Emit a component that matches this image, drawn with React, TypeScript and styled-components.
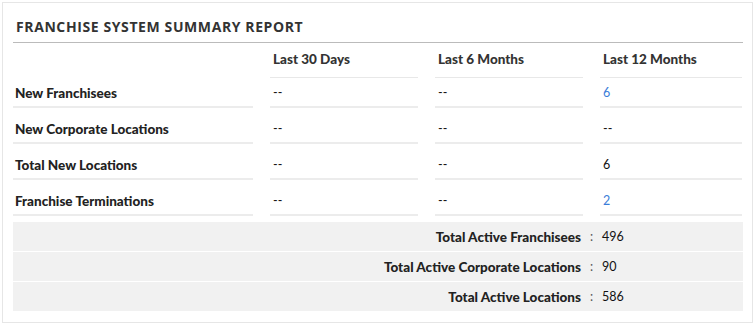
import React from 'react';
import styled, { createGlobalStyle } from 'styled-components';

const GlobalStyle = createGlobalStyle`
  html, body {
    margin: 0;
    padding: 0;
    background: #ffffff;
  }
  body {
    font-family: Lato, "Liberation Sans", sans-serif;
    color: #222;
  }
`;

type Cell = { value: string; link?: boolean };

interface Row {
  label: string;
  cells: Cell[];
}

const rows: Row[] = [
  { label: 'New Franchisees', cells: [{ value: '--' }, { value: '--' }, { value: '6', link: true }] },
  { label: 'New Corporate Locations', cells: [{ value: '--' }, { value: '--' }, { value: '--' }] },
  { label: 'Total New Locations', cells: [{ value: '--' }, { value: '--' }, { value: '6' }] },
  { label: 'Franchise Terminations', cells: [{ value: '--' }, { value: '--' }, { value: '2', link: true }] },
];

const totals = [
  { label: 'Total Active Franchisees', value: '496' },
  { label: 'Total Active Corporate Locations', value: '90' },
  { label: 'Total Active Locations', value: '586' },
];

const periods = ['Last 30 Days', 'Last 6 Months', 'Last 12 Months'];

const App = () => {
  return (
    <>
      <GlobalStyle />
      <Page>
        <Panel>
          <Title>Franchise System Summary Report</Title>
          <SummaryGrid>
            <HeadCell $blank />
            {periods.map((p) => (
              <HeadCell key={p}>{p}</HeadCell>
            ))}
            {rows.map((row, r) => (
              <React.Fragment key={row.label}>
                <LabelCell $first={r === 0}>{row.label}</LabelCell>
                {row.cells.map((c, i) => (
                  <ValueCell key={i} $first={r === 0} $link={c.link}>
                    {c.value}
                  </ValueCell>
                ))}
              </React.Fragment>
            ))}
          </SummaryGrid>
          <Totals>
            {totals.map((t) => (
              <TotalRow key={t.label}>
                <TotalLabel>{t.label}</TotalLabel>
                <Colon>:</Colon>
                <TotalValue>{t.value}</TotalValue>
              </TotalRow>
            ))}
          </Totals>
        </Panel>
      </Page>
    </>
  );
};

export default App;

const Page = styled.div`
  width: 755px;
  height: 326px;
  padding: 2px 0 0 2px;
  box-sizing: border-box;
`;

const Panel = styled.div`
  width: 751px;
  height: 321px;
  box-sizing: border-box;
  border: 1px solid #e6e6e6;
  padding: 0 9px 0 10px;
`;

const Title = styled.h3`
  margin: 0;
  height: 40px;
  box-sizing: border-box;
  padding: 15px 0 0 3px;
  border-bottom: 1px solid #bbbbbb;
  font-family: "Open Sans", "Liberation Sans", sans-serif;
  font-size: 14px;
  font-weight: 700;
  line-height: 18px;
  text-transform: uppercase;
  letter-spacing: 0.6px;
  color: #333;
`;

const SummaryGrid = styled.div`
  display: grid;
  grid-template-columns: 240px 148px 148px 142px;
  column-gap: 17px;
`;

const HeadCell = styled.div<{ $blank?: boolean }>`
  height: 35px;
  box-sizing: border-box;
  display: flex;
  align-items: flex-end;
  padding: 0 0 10px 3px;
  border-bottom: 1px solid ${(p) => (p.$blank ? 'transparent' : '#e8e8e8')};
  font-size: 13.5px;
  line-height: 16px;
  font-weight: 900;
  color: #333;
`;

const LabelCell = styled.div<{ $first?: boolean }>`
  height: ${(p) => (p.$first ? 30 : 36)}px;
  box-sizing: border-box;
  display: flex;
  align-items: flex-end;
  padding: 0 0 5px 2px;
  border-bottom: 2px solid #ececec;
  font-size: 13.5px;
  line-height: 16px;
  font-weight: 900;
  color: #222;
`;

const ValueCell = styled(LabelCell)<{ $link?: boolean }>`
  padding-left: 3px;
  font-weight: 400;
  font-size: 12.5px;
  color: ${(p) => (p.$link ? '#3b7dd8' : '#111')};
`;

const Totals = styled.div`
  margin-top: 6px;
  display: flex;
  flex-direction: column;
  gap: 1px;
`;

const TotalRow = styled.div`
  height: 29px;
  display: flex;
  align-items: center;
  background: #f1f1f1;
`;

const TotalLabel = styled.div`
  width: 568px;
  text-align: right;
  font-size: 13.5px;
  font-weight: 900;
  color: #222;
`;

const Colon = styled.span`
  width: 21px;
  text-align: center;
  font-size: 12.5px;
  color: #555;
`;

const TotalValue = styled.span`
  font-size: 12.5px;
  color: #111;
`;
